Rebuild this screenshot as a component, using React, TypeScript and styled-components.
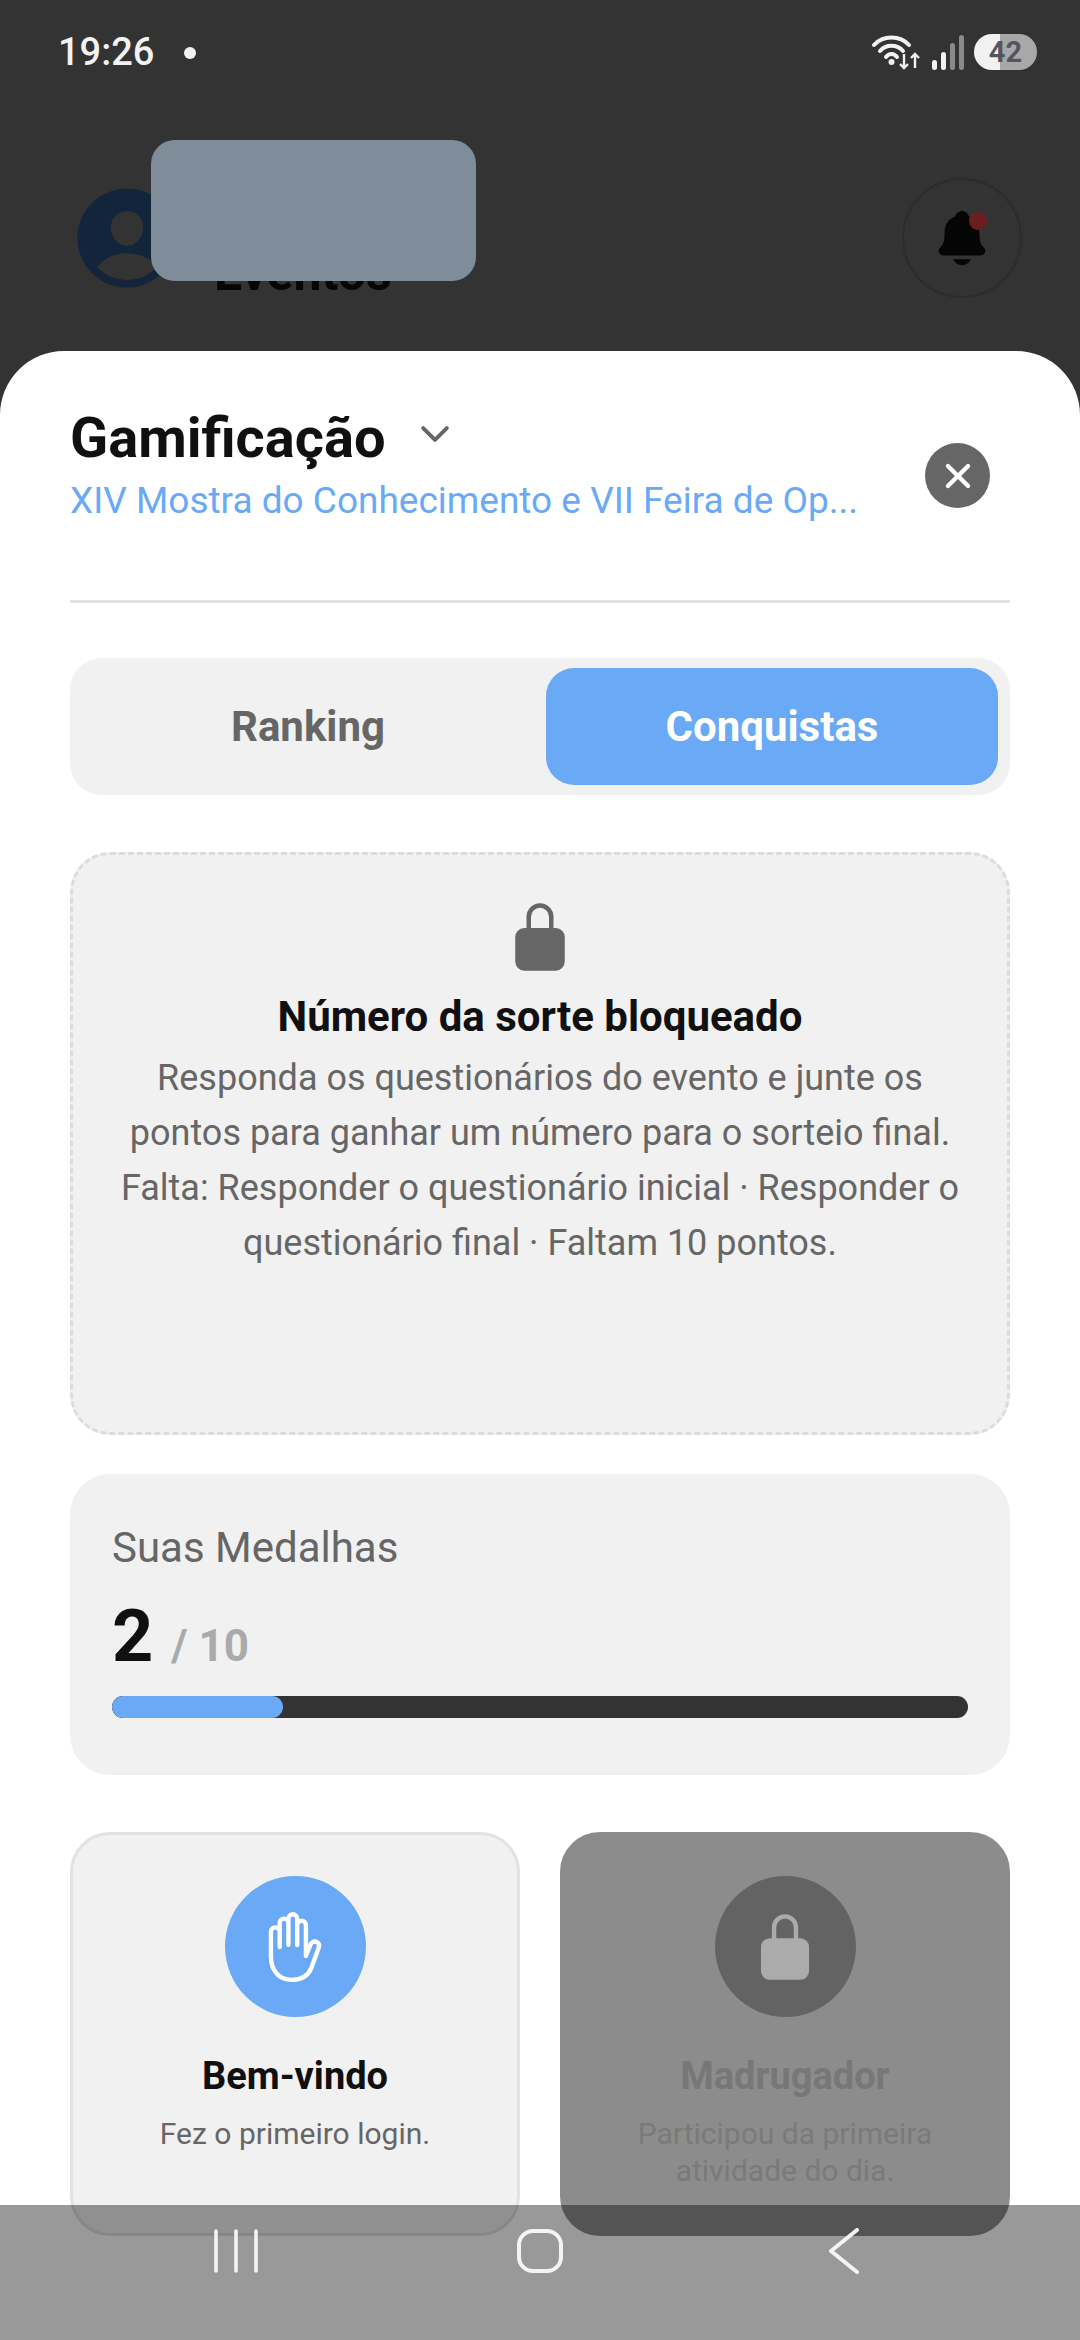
import * as React from 'react'
import styled, { createGlobalStyle } from 'styled-components'
import {
  IoChevronDown,
  IoClose,
  IoHandLeftOutline,
  IoLockClosed,
  IoNotifications,
  IoPersonCircle,
} from 'react-icons/io5'

const Global = createGlobalStyle`
  html, body {
    margin: 0;
    padding: 0;
    background: #333;
  }
  * {
    box-sizing: border-box;
  }
`

const Screen = styled.div`
  position: relative;
  width: 1080px;
  height: 2340px;
  overflow: hidden;
  background: #333;
  font-family: Roboto, "Noto Sans", sans-serif;
`

const StatusBar = styled.div`
  display: flex;
  align-items: center;
  justify-content: space-between;
  height: 104px;
  padding: 0 43px 0 58px;
`

const Time = styled.span`
  font-size: 38px;
  font-weight: 500;
  color: #f2f2f2;
`

const Dot = styled.span`
  display: inline-block;
  width: 12px;
  height: 12px;
  margin-left: 30px;
  border-radius: 50%;
  background: #f2f2f2;
  vertical-align: 6px;
`

const StatusIcons = styled.div`
  display: flex;
  align-items: center;
  gap: 9px;
`

const Battery = styled.div`
  position: relative;
  width: 63px;
  height: 36px;
  border-radius: 18px;
  overflow: hidden;
  background: linear-gradient(90deg, #f2f2f2 0 41%, #a8a8a8 41% 100%);
  display: flex;
  align-items: center;
  justify-content: center;
  font-size: 29px;
  font-weight: 700;
  color: #55555c;
`

const Backdrop = styled.div`
  height: 351px;
`

const AppHeader = styled.div`
  display: flex;
  align-items: center;
  height: 120px;
  margin-top: 74px;
  padding: 0 58px 0 66px;
`

const Avatar = styled(IoPersonCircle)`
  flex: none;
  width: 122px;
  height: 122px;
  margin-top: 0;
  color: #13253a;
`

const AppTitle = styled.span`
  flex: 1;
  align-self: flex-end;
  margin-left: 26px;
  font-size: 50px;
  line-height: 50px;
  font-weight: 700;
  color: #060606;
`

const BellButton = styled.div`
  position: relative;
  display: flex;
  align-items: center;
  justify-content: center;
  width: 120px;
  height: 120px;
  border-radius: 50%;
  border: 2px solid #2c2c2c;
  color: #050505;
  font-size: 62px;
`

const BellDot = styled.span`
  position: absolute;
  top: 32px;
  right: 33px;
  width: 18px;
  height: 18px;
  border-radius: 50%;
  background: #6b1d1f;
`

const Redaction = styled.div`
  position: absolute;
  left: 151px;
  top: 140px;
  width: 325px;
  height: 141px;
  border-radius: 24px;
  background: #7f8c99;
`

const Sheet = styled.div`
  display: flex;
  flex-direction: column;
  height: 1989px;
  padding: 0 70px;
  border-radius: 64px 64px 0 0;
  background: #fff;
`

const SheetHeader = styled.div`
  display: flex;
  align-items: center;
  justify-content: space-between;
  height: 252px;
  padding: 0 20px 0 0;
  border-bottom: 3px solid #e2e2e2;
`

const SheetHeading = styled.div`
  display: flex;
  flex-direction: column;
  width: 800px;
  margin-top: -24px;
`

const TitleRow = styled.div`
  display: flex;
  align-items: center;
  gap: 28px;
`

const Title = styled.h1`
  margin: 0;
  font-size: 56px;
  line-height: 68px;
  font-weight: 700;
  color: #101010;
`

const Chevron = styled(IoChevronDown)`
  width: 42px;
  height: 42px;
  margin-top: -8px;
  color: #666;
`

const Subtitle = styled.p`
  margin: 6px 0 0;
  font-size: 37px;
  line-height: 46px;
  color: #69a9f5;
  white-space: nowrap;
  overflow: hidden;
  text-overflow: ellipsis;
`

const CloseButton = styled.div`
  display: flex;
  align-items: center;
  justify-content: center;
  width: 65px;
  height: 65px;
  border-radius: 50%;
  background: #666;
  color: #fff;
  font-size: 46px;
`

const Tabs = styled.div`
  display: grid;
  grid-template-columns: 1fr 1fr;
  gap: 12px;
  height: 137px;
  margin-top: 55px;
  padding: 10px 12px;
  border-radius: 32px;
  background: #f1f1f1;
`

const Tab = styled.div<{ $active?: boolean }>`
  display: flex;
  align-items: center;
  justify-content: center;
  border-radius: 28px;
  font-size: 42px;
  font-weight: 700;
  background: ${p => (p.$active ? '#69a9f5' : 'transparent')};
  color: ${p => (p.$active ? '#fff' : '#666')};
`

const LockedCard = styled.div`
  display: flex;
  flex-direction: column;
  align-items: center;
  height: 583px;
  margin-top: 57px;
  padding: 46px 40px 0;
  border: 3px dashed #dcdcdc;
  border-radius: 40px;
  background: #f1f1f1;
  text-align: center;
`

const LockedIcon = styled(IoLockClosed)`
  width: 72px;
  height: 72px;
  color: #666;
`

const LockedTitle = styled.h2`
  margin: 19px 0 0;
  font-size: 42px;
  line-height: 50px;
  font-weight: 700;
  color: #101010;
`

const LockedText = styled.p`
  margin: 9px 0 0;
  font-size: 36px;
  line-height: 55px;
  color: #666;
`

const MedalsCard = styled.div`
  height: 301px;
  margin-top: 39px;
  padding: 47px 42px 0;
  border-radius: 40px;
  background: #f1f1f1;
`

const MedalsLabel = styled.div`
  font-size: 42px;
  line-height: 54px;
  color: #666;
`

const MedalsCount = styled.div`
  display: flex;
  align-items: baseline;
  margin-top: 20px;
  font-weight: 700;
`

const MedalsValue = styled.span`
  font-size: 72px;
  line-height: 84px;
  color: #101010;
`

const MedalsTotal = styled.span`
  margin-left: 18px;
  font-size: 44px;
  color: #aaa;
`

const Progress = styled.div`
  height: 22px;
  margin-top: 17px;
  border-radius: 11px;
  overflow: hidden;
  background: #333;
`

const ProgressFill = styled.div`
  height: 100%;
  border-radius: 11px;
  background: #69a9f5;
`

const BadgeGrid = styled.div`
  display: grid;
  grid-template-columns: 450px 450px;
  justify-content: space-between;
  margin-top: 57px;
`

const Badge = styled.div<{ $locked?: boolean }>`
  display: flex;
  flex-direction: column;
  align-items: center;
  height: 404px;
  padding: 41px 26px 0;
  border: 3px solid ${p => (p.$locked ? '#8c8c8c' : '#e2e2e2')};
  border-radius: 40px;
  background: ${p => (p.$locked ? '#8c8c8c' : '#f1f1f1')};
  text-align: center;
`

const BadgeCircle = styled.div<{ $locked?: boolean }>`
  display: flex;
  align-items: center;
  justify-content: center;
  flex: none;
  width: 141px;
  height: 141px;
  border-radius: 50%;
  background: ${p => (p.$locked ? '#636363' : '#69a9f5')};
  color: ${p => (p.$locked ? '#ababab' : '#fff')};
  font-size: 70px;
`

const BadgeTitle = styled.div<{ $locked?: boolean }>`
  margin-top: 36px;
  font-size: 38px;
  line-height: 46px;
  font-weight: 700;
  color: ${p => (p.$locked ? '#777' : '#101010')};
`

const BadgeText = styled.div<{ $locked?: boolean }>`
  margin-top: 16px;
  font-size: 30px;
  line-height: 37px;
  color: ${p => (p.$locked ? '#7a7a7a' : '#666')};
`

const NavBar = styled.div`
  position: absolute;
  left: 0;
  right: 0;
  bottom: 0;
  height: 135px;
  padding-bottom: 43px;
  display: flex;
  align-items: center;
  justify-content: center;
  gap: 0;
  background: rgba(0, 0, 0, 0.4);
`

const NavSlot = styled.div`
  display: flex;
  align-items: center;
  justify-content: center;
  width: 304px;
`

const WifiIcon = () => (
  <svg width="50" height="36" viewBox="0 0 50 36" fill="none">
    <path d="M2 11 C11 1 28 1 37 11" stroke="#f2f2f2" strokeWidth="4" strokeLinecap="round" />
    <path d="M8 17 C14 10 25 10 31 17" stroke="#f2f2f2" strokeWidth="4" strokeLinecap="round" />
    <path d="M14 23 C17 19 22 19 25 23" stroke="#f2f2f2" strokeWidth="4" strokeLinecap="round" />
    <circle cx="19.5" cy="28" r="3" fill="#f2f2f2" />
    <path d="M32 20 V34 M28 30 L32 34 L36 30 M43 34 V20 M39 24 L43 20 L47 24" stroke="#f2f2f2" strokeWidth="2.4" />
  </svg>
)

const SignalIcon = () => (
  <svg width="34" height="36" viewBox="0 0 34 36">
    <rect x="1" y="26" width="5" height="10" rx="2.5" fill="#f2f2f2" />
    <rect x="10" y="18" width="5" height="18" rx="2.5" fill="#f2f2f2" />
    <rect x="19" y="9" width="5" height="27" rx="2.5" fill="#8a8a8a" />
    <rect x="28" y="1" width="5" height="35" rx="2.5" fill="#8a8a8a" />
  </svg>
)

const RecentsIcon = () => (
  <svg width="46" height="46" viewBox="0 0 46 46" fill="none" stroke="#f4f4f4" strokeWidth="3.6" strokeLinecap="round">
    <path d="M3 3 V43 M23 3 V43 M43 3 V43" />
  </svg>
)

const HomeIcon = () => (
  <svg width="48" height="46" viewBox="0 0 48 46" fill="none" stroke="#f4f4f4" strokeWidth="4">
    <rect x="3" y="3" width="42" height="40" rx="14" />
  </svg>
)

const BackIcon = () => (
  <svg width="34" height="46" viewBox="0 0 34 46" fill="none" stroke="#f4f4f4" strokeWidth="4" strokeLinecap="round" strokeLinejoin="round">
    <path d="M30 2 L4 23 L30 44" />
  </svg>
)

const App: React.FC = () => (
  <Screen>
    <Global />
    <Backdrop>
      <StatusBar>
        <Time>
          19:26<Dot />
        </Time>
        <StatusIcons>
          <WifiIcon />
          <SignalIcon />
          <Battery>42</Battery>
        </StatusIcons>
      </StatusBar>
      <AppHeader>
        <Avatar />
        <AppTitle>Eventos</AppTitle>
        <BellButton>
          <IoNotifications />
          <BellDot />
        </BellButton>
      </AppHeader>
    </Backdrop>
    <Redaction />
    <Sheet>
      <SheetHeader>
        <SheetHeading>
          <TitleRow>
            <Title>Gamificação</Title>
            <Chevron />
          </TitleRow>
          <Subtitle>XIV Mostra do Conhecimento e VII Feira de Op...</Subtitle>
        </SheetHeading>
        <CloseButton>
          <IoClose />
        </CloseButton>
      </SheetHeader>
      <Tabs>
        <Tab>Ranking</Tab>
        <Tab $active>Conquistas</Tab>
      </Tabs>
      <LockedCard>
        <LockedIcon />
        <LockedTitle>Número da sorte bloqueado</LockedTitle>
        <LockedText>
          Responda os questionários do evento e junte os pontos para ganhar um número para o sorteio final.
          <br />
          Falta: Responder o questionário inicial · Responder o questionário final · Faltam 10 pontos.
        </LockedText>
      </LockedCard>
      <MedalsCard>
        <MedalsLabel>Suas Medalhas</MedalsLabel>
        <MedalsCount>
          <MedalsValue>2</MedalsValue>
          <MedalsTotal>/ 10</MedalsTotal>
        </MedalsCount>
        <Progress>
          <ProgressFill style={{ width: `${(2 / 10) * 100}%` }} />
        </Progress>
      </MedalsCard>
      <BadgeGrid>
        <Badge>
          <BadgeCircle>
            <IoHandLeftOutline />
          </BadgeCircle>
          <BadgeTitle>Bem-vindo</BadgeTitle>
          <BadgeText>Fez o primeiro login.</BadgeText>
        </Badge>
        <Badge $locked>
          <BadgeCircle $locked>
            <IoLockClosed />
          </BadgeCircle>
          <BadgeTitle $locked>Madrugador</BadgeTitle>
          <BadgeText $locked>Participou da primeira atividade do dia.</BadgeText>
        </Badge>
      </BadgeGrid>
    </Sheet>
    <NavBar>
      <NavSlot><RecentsIcon /></NavSlot>
      <NavSlot><HomeIcon /></NavSlot>
      <NavSlot><BackIcon /></NavSlot>
    </NavBar>
  </Screen>
)

export default App
